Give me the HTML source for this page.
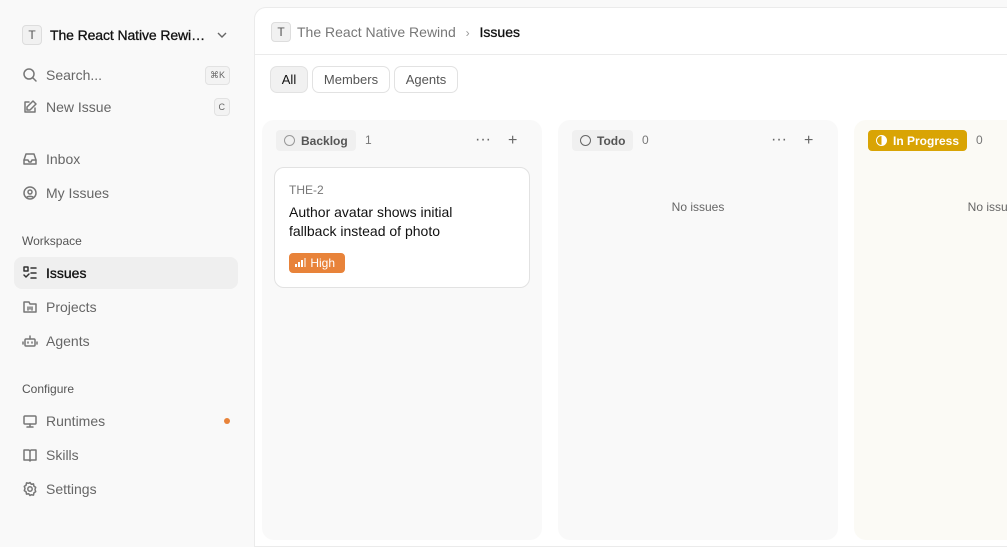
<!DOCTYPE html>
<html><head><style>
*{box-sizing:border-box;margin:0;padding:0}
body{width:1007px;height:532px;overflow:hidden;background:#f9f9f9;font-family:"Liberation Sans",Arial,sans-serif;position:relative;color:#1a1a1a}
.sb{position:absolute;left:0;top:0;width:254px;height:532px}
.it{position:absolute;left:14px;width:224px;height:32px;display:flex;align-items:center;padding-left:8px;font-size:14px;color:#666;border-radius:8px}
.it svg{width:16px;height:16px;margin-right:8px;fill:none;stroke:#777;stroke-width:1.5;stroke-linecap:round;stroke-linejoin:round}
.kbd{position:absolute;right:8px;font-size:9px;border:1px solid #e2e2e2;border-radius:4px;background:#f3f3f3;padding:3px 4px;color:#666}
.lbl{position:absolute;left:22px;font-size:12px;color:#555}
.main{position:absolute;left:254px;top:7px;width:760px;height:540px;background:#fff;border-radius:12px 0 0 0;border:1px solid #ebebeb}
.tb{position:absolute;top:66px;height:27px;border:1px solid #e2e2e2;border-radius:7px;font-size:13px;color:#555;display:flex;align-items:center;justify-content:center}
.col{position:absolute;top:120px;width:280px;height:420px;background:#f9f9f9;border-radius:12px}
.chip{position:absolute;top:10px;left:14px;height:21px;border-radius:4px;background:#f0f0f0;font-size:12px;font-weight:bold;color:#555;display:flex;align-items:center;padding:0 8px 0 8px}
.cnt{position:absolute;top:13px;font-size:12px;color:#777}
.ni{position:absolute;top:80px;width:100%;text-align:center;font-size:12px;color:#666}
.act{position:absolute;top:13px;font-size:16px;color:#666;line-height:16px}
</style></head><body>
<div class="sb">
 <div style="position:absolute;left:22px;top:25px;width:20px;height:20px;border:1px solid #ddd;border-radius:4px;background:#f1f1f1;font-size:12px;color:#555;text-align:center;line-height:18px">T</div>
 <div style="position:absolute;left:50px;top:27px;font-size:14px;color:#111;-webkit-text-stroke:0.3px #111;letter-spacing:-0.1px">The React Native Rewi…</div>
 <svg style="position:absolute;left:216px;top:30px" width="12" height="10" viewBox="0 0 12 10"><path d="M2 3l4 4 4-4" fill="none" stroke="#666" stroke-width="1.4"/></svg>
 <div class="it" style="top:59px"><svg viewBox="0 0 16 16"><circle cx="7" cy="7" r="5"/><path d="M11 11l3 3"/></svg>Search...<span class="kbd">⌘K</span></div>
 <div class="it" style="top:91px"><svg viewBox="0 0 16 16"><path d="M13 9v4H3V3h4"/><path d="M11 2l3 3-6 6H5V8z"/></svg>New Issue<span class="kbd">C</span></div>
 <div class="it" style="top:143px"><svg viewBox="0 0 16 16"><path d="M2 9l2-6h8l2 6v4H2z"/><path d="M2 9h4l1 2h2l1-2h4"/></svg>Inbox</div>
 <div class="it" style="top:177px"><svg viewBox="0 0 16 16"><circle cx="8" cy="8" r="6"/><circle cx="8" cy="7" r="2"/><path d="M4.5 12.5c1-1.5 6-1.5 7 0"/></svg>My Issues</div>
 <div class="lbl" style="top:234px">Workspace</div>
 <div class="it" style="top:257px;background:#efefef;color:#111;-webkit-text-stroke:0.3px #111"><svg viewBox="0 0 16 16" style="stroke:#333"><rect x="2" y="2" width="4" height="4"/><path d="M2 10l2 2 3-3M9 3h5M9 8h5M9 13h5"/></svg>Issues</div>
 <div class="it" style="top:291px"><svg viewBox="0 0 16 16"><path d="M2 3h5l1 2h6v8H2z"/><path d="M6 8v3M8 8v2M10 8v3"/></svg>Projects</div>
 <div class="it" style="top:325px"><svg viewBox="0 0 16 16"><rect x="3" y="6" width="10" height="7" rx="1"/><path d="M8 3v3M1 9v2M15 9v2M6 9v1M10 9v1"/></svg>Agents</div>
 <div class="lbl" style="top:382px">Configure</div>
 <div class="it" style="top:405px"><svg viewBox="0 0 16 16"><rect x="2" y="3" width="12" height="8" rx="1"/><path d="M8 11v3M5 14h6"/></svg>Runtimes<span style="position:absolute;right:8px;width:6px;height:6px;border-radius:3px;background:#e8833a"></span></div>
 <div class="it" style="top:439px"><svg viewBox="0 0 16 16"><path d="M2 3h5l1 1 1-1h5v10H9l-1 1-1-1H2z"/><path d="M8 4v9"/></svg>Skills</div>
 <div class="it" style="top:473px"><svg viewBox="0 0 16 16"><circle cx="8" cy="8" r="2.2"/><path d="M8 1.5l1.3 1.8 2.2-.4.4 2.2L13.7 6.4 13 8.5l.7 2.1-1.8 1.3-.4 2.2-2.2-.4L8 14.5l-1.3-1.8-2.2.4-.4-2.2L2.3 9.6 3 7.5l-.7-2.1 1.8-1.3.4-2.2 2.2.4z"/></svg>Settings</div>
</div>
<div class="main">
 <div style="position:absolute;left:16px;top:14px;width:20px;height:20px;border:1px solid #ddd;border-radius:4px;background:#f1f1f1;font-size:12px;color:#555;text-align:center;line-height:18px">T</div>
 <div style="position:absolute;left:42px;top:16px;font-size:14px;color:#777">The React Native Rewind <span style="margin:0 6px;color:#999;font-size:12px">›</span> <span style="color:#111;-webkit-text-stroke:0.3px #111">Issues</span></div>
 <div style="position:absolute;left:0;top:46px;width:100%;border-top:1px solid #ebebeb"></div>
</div>
<div class="tb" style="left:270px;width:38px;background:#f1f1f1;color:#111">All</div>
<div class="tb" style="left:312px;width:78px">Members</div>
<div class="tb" style="left:394px;width:64px">Agents</div>
<div class="col" style="left:262px">
 <div class="chip"><span style="width:11px;height:11px;border:1.3px solid #999;border-radius:50%;margin-right:6px"></span>Backlog</div>
 <div class="cnt" style="left:103px">1</div>
 <div class="act" style="left:213px;top:12px">···</div><div class="act" style="left:246px">+</div>
 <div style="position:absolute;left:12px;top:47px;width:256px;height:121px;background:#fff;border:1px solid #e2e2e2;border-radius:10px">
  <div style="position:absolute;left:14px;top:15px;font-size:12px;color:#777">THE-2</div>
  <div style="position:absolute;left:14px;top:35px;font-size:14px;line-height:19px;color:#111">Author avatar shows initial<br>fallback instead of photo</div>
  <div style="position:absolute;left:14px;top:85px;height:20px;width:56px;background:#e8833a;border-radius:4px;color:#fff;font-size:12px;display:flex;align-items:center;padding-left:6px"><svg width="12" height="10" viewBox="0 0 12 10"><rect x="0" y="6" width="2" height="3" fill="#fff"/><rect x="3" y="4" width="2" height="5" fill="#fff"/><rect x="6" y="2" width="2" height="7" fill="#fff"/><rect x="9" y="0" width="2" height="9" fill="#f3c29e"/></svg>&nbsp;High</div>
 </div>
</div>
<div class="col" style="left:558px">
 <div class="chip"><span style="width:11px;height:11px;border:1.3px solid #666;border-radius:50%;margin-right:6px"></span>Todo</div>
 <div class="cnt" style="left:84px">0</div>
 <div class="act" style="left:213px;top:12px">···</div><div class="act" style="left:246px">+</div>
 <div class="ni">No issues</div>
</div>
<div class="col" style="left:854px;background:#fbfaf5">
 <div class="chip" style="background:#d9a404;color:#fff"><span style="width:11px;height:11px;border:1.5px solid #fff;border-radius:50%;margin-right:6px;background:linear-gradient(90deg,transparent 50%,#fff 50%)"></span>In Progress</div>
 <div class="cnt" style="left:122px">0</div>
 <div class="ni" style="left:0">No issues</div>
</div>
</body></html>
